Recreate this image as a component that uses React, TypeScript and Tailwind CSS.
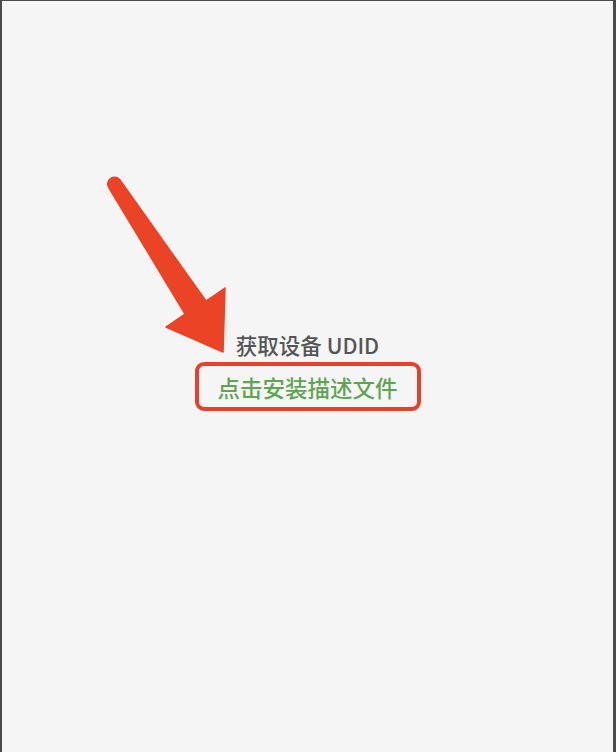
import React from 'react';

const Arrow: React.FC = () => (
  <svg className="absolute left-0 top-0 pointer-events-none" width="616" height="752" viewBox="0 0 616 752">
    <path
      d="M118 179 L204 300 L223 287 L221 351 L164 326 L183 313 L107 187 A6.5 6.5 0 0 1 118 179 Z"
      fill="#ea4326"
      stroke="#ea4326"
      strokeWidth="1.5"
      strokeLinejoin="round"
    />
  </svg>
);

export default function App() {
  return (
    <div className="relative w-[616px] h-[752px] bg-[#f5f5f5] border-l-2 border-t border-r-[3px] border-[#4a4a4a] overflow-hidden">
      <div
        className="flex flex-col items-center pt-[330px]"
        style={{ fontFamily: '"Noto Sans CJK SC", "Noto Sans", sans-serif' }}
      >
        <div className="text-[21.5px] leading-[28px] font-medium text-[#555555]">获取设备 UDID</div>
        <div className="mt-[3px] w-[226px] h-[49px] border-[4px] border-[#e8402a] rounded-[9px] flex items-center justify-center">
          <span className="text-[22.5px] leading-[28px] font-medium text-[#5ea552]">点击安装描述文件</span>
        </div>
      </div>
      <Arrow />
    </div>
  );
}
